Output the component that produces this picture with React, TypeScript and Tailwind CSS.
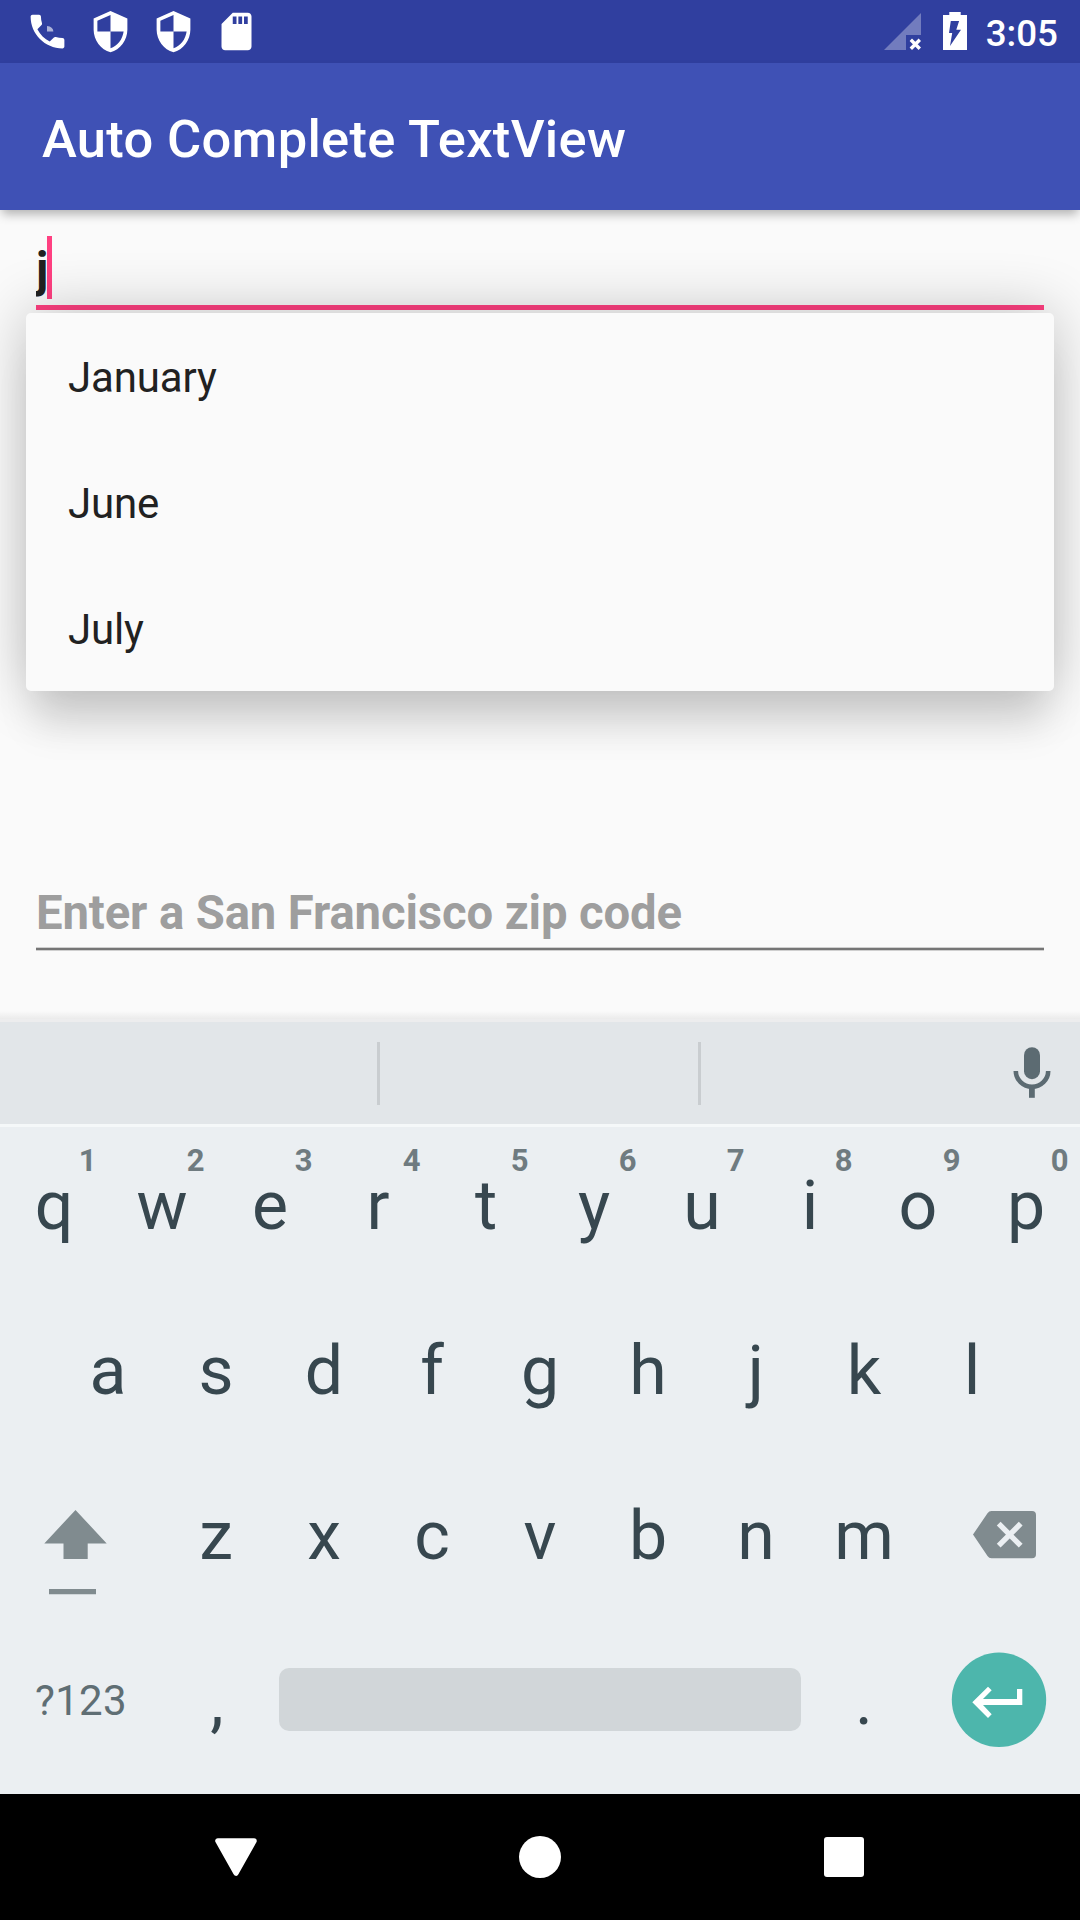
import { MdPhone, MdSdCard, MdSecurity } from "react-icons/md";

const TOP_ROW = ["q", "w", "e", "r", "t", "y", "u", "i", "o", "p"];
const HOME_ROW = ["a", "s", "d", "f", "g", "h", "j", "k", "l"];
const BOTTOM_ROW = ["z", "x", "c", "v", "b", "n", "m"];
const MONTHS = ["January", "June", "July"];

function Key({ label, hint, className = "w-[108px]" }: { label: string; hint?: string; className?: string }) {
  return (
    <div className={`relative shrink-0 pt-[39px] text-center text-[68px] leading-[80px] text-[#37474f] ${className}`}>
      {label}
      {hint && (
        <span className="absolute top-[15px] right-[11.5px] text-[31px] leading-[37px] font-bold text-[#6f7b80]">{hint}</span>
      )}
    </div>
  );
}

function StatusBar() {
  return (
    <div className="flex h-[63px] shrink-0 items-start bg-[#303f9f] text-white">
      <div className="flex gap-[18px] pt-[9px] pl-[25px]">
        <div className="relative">
          <MdPhone size={45} />
          <svg className="absolute top-[17px] left-[22px]" width="7" height="6" viewBox="0 0 7 6">
            <path d="M0 0Q6 .5 6.4 5.5H0z" fill="#fff" fillOpacity=".6" />
          </svg>
        </div>
        <MdSecurity size={45} />
        <MdSecurity size={45} />
        <MdSdCard size={45} />
      </div>
      <div className="ml-auto flex pr-[22px]">
        <svg className="mt-3" width="38" height="40" viewBox="0 0 38 40">
          <path d="M1 38L38 1v22H23v15z" fill="#fff" fillOpacity=".32" />
          <path d="M27.8 27.8l9 9m0-9l-9 9" stroke="#fff" strokeWidth="3.4" />
        </svg>
        <svg className="mt-3 ml-[22px]" width="24" height="38" viewBox="0 0 24 38">
          <path d="M6.3 0h11.4v3H24v35H0V3h6.3z" fill="#fff" />
          <path d="M7.8 8.9h8.3l-2.8 8.9H18L7 34l2.2-13H6z" fill="#303f9f" />
        </svg>
        <span className="mt-3 ml-[19px] text-[36.75px] leading-[43px] font-medium">3:05</span>
      </div>
    </div>
  );
}

function SuggestionMenu() {
  return (
    <ul className="absolute top-[103px] left-[26px] z-10 w-[1028px] rounded-[5px] bg-[#fafafa] shadow-[0_0_60px_rgba(0,0,0,0.24),0_44px_36px_-8px_rgba(0,0,0,0.1)]">
      {MONTHS.map((month) => (
        <li key={month} className="h-[126px] pt-[40px] pl-[42px] text-[42px] leading-[49px] tracking-[-0.15px] text-[#212121]">
          {month}
        </li>
      ))}
    </ul>
  );
}

function Keyboard() {
  return (
    <div className="relative z-20 flex h-[783px] shrink-0 flex-col bg-[#ebeff2]">
      <div className="h-[8px] shrink-0 bg-linear-to-b from-[#fafafa] to-[#ebebeb]" />
      <div className="h-[3px] shrink-0 bg-[#ededee]" />
      <div className="flex h-[102px] shrink-0 items-start bg-[#e2e6e9]">
        <div className="mt-5 ml-[377px] h-[63px] w-[3px] bg-[#c9cdd0]" />
        <div className="mt-5 ml-[318px] h-[63px] w-[3px] bg-[#c9cdd0]" />
        <svg className="mt-6 ml-[311px]" width="40" height="54" viewBox="0 0 40 54">
          <rect x="12" y="1.2" width="16" height="32" rx="8" fill="#5c6b72" />
          <path d="M3.8 25a16.2 15.7 0 0 0 32.4 0" fill="none" stroke="#5c6b72" strokeWidth="4.6" />
          <path d="M17 41.5h5.8v10.3H17z" fill="#5c6b72" />
        </svg>
      </div>
      <div className="h-[3px] shrink-0 bg-[#f5f8f9]" />
      <div className="flex h-[165px] shrink-0">
        {TOP_ROW.map((k, i) => (
          <Key key={k} label={k} hint={String((i + 1) % 10)} />
        ))}
      </div>
      <div className="flex h-[165px] shrink-0 justify-center">
        {HOME_ROW.map((k) => (
          <Key key={k} label={k} />
        ))}
      </div>
      <div className="flex h-[165px] shrink-0">
        <div className="w-[162px] pt-[52px] pl-[44px]">
          <svg width="64" height="88" viewBox="0 0 64 88" fill="#808b8f">
            <path d="M31.5 1l31.2 33.4h-19V50H19.5V34.4H.3z" />
            <path d="M5 80h47v5.3H5z" />
          </svg>
        </div>
        {BOTTOM_ROW.map((k) => (
          <Key key={k} label={k} />
        ))}
        <div className="w-[162px] pt-[53px] pl-[54px]">
          <svg width="66" height="50" viewBox="0 0 66 50">
            <path
              d="M19.5 1H60a4 4 0 0 1 4 4v39.3a4 4 0 0 1-4 4H19.5q-2.5 0-4-2.3L1 24.500 15.500 3.300q1.5-2.3 4-2.3z"
              fill="#808b8f"
            />
            <path d="M26.700 13.700l22 22m0-22l-22 22" stroke="#ebeff2" strokeWidth="5.4" />
          </svg>
        </div>
      </div>
      <div className="flex h-[172px] shrink-0 items-start">
        <div className="w-[162px] pt-[54px] pl-[35px] text-[42px] leading-[49px] tracking-[0.3px] text-[#5f6e74]">?123</div>
        <Key label="," className="w-[110px]" />
        <div className="mt-[46px] ml-[7px] h-[63px] w-[522px] rounded-[10px] bg-[#d1d6d9]" />
        <Key label="." className="w-[126px]" />
        <svg className="mt-[29px] ml-6" width="96" height="98" viewBox="0 0 96 98">
          <circle cx="48" cy="48.8" r="47.2" fill="#4db6ac" />
          <path d="M21.3 51.3L37 35.7l3.7 3.6L32 48h34V38h5.3v16H32l8.7 9.3L37 67z" fill="#fff" />
        </svg>
      </div>
    </div>
  );
}

function NavigationBar() {
  return (
    <div className="flex h-[126px] shrink-0 items-center bg-black px-[84px]">
      <div className="flex w-[304px] justify-center">
        <svg width="42" height="38" viewBox="0 0 42 38">
          <path d="M3 3h36L21 35z" fill="#fff" stroke="#fff" strokeWidth="5.5" strokeLinejoin="round" />
        </svg>
      </div>
      <div className="flex w-[304px] justify-center">
        <div className="size-[42px] rounded-full bg-white" />
      </div>
      <div className="flex w-[304px] justify-center">
        <div className="size-[40px] rounded-[3px] bg-white" />
      </div>
    </div>
  );
}

export default function App() {
  return (
    <div className="flex h-[1920px] w-[1080px] flex-col overflow-hidden bg-[#fafafa] font-['Roboto',sans-serif]">
      <StatusBar />
      <header className="relative z-20 h-[147px] shrink-0 bg-[#3f51b5] pt-[45px] pl-[42px] text-[52.5px] leading-[62px] font-medium tracking-[0.3px] text-white shadow-[0_6px_10px_-2px_rgba(0,0,0,0.3)]">
        Auto Complete TextView
      </header>
      <main className="relative h-[801px] shrink-0 px-9">
        <div className="flex h-[100px] items-start border-b-[5px] border-[#ff4081] pt-[26px]">
          <span className="mt-[6px] w-[11px] overflow-hidden text-[47.25px] leading-[56px] font-bold text-[#212121]">j</span>
          <span className="h-[63px] w-[5px] bg-[#ff4081]" />
        </div>
        <div className="mt-[575px] h-[62px] text-[47.25px] leading-[56px] font-bold tracking-[-0.12px] text-[#9e9e9e]">
          Enter a San Francisco zip code
        </div>
        <div className="h-[4px] border-y border-[#cfcfcf] bg-[#757575]" />
        <SuggestionMenu />
      </main>
      <Keyboard />
      <NavigationBar />
    </div>
  );
}
